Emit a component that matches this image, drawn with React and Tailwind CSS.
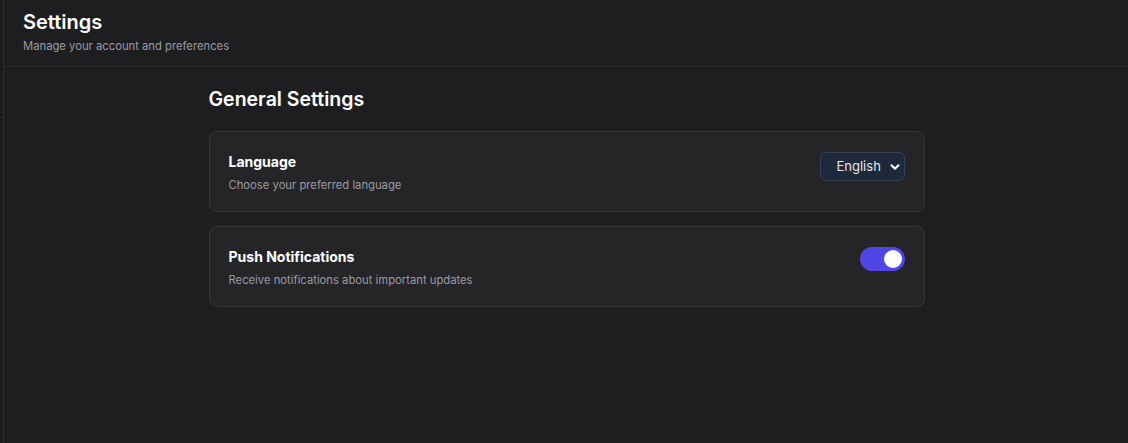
import React, { useState } from "react";

export default function App() {
  const [on, setOn] = useState(true);
  return (
    <div
      className="flex h-[443px] w-full bg-[#1e1e21] text-white overflow-hidden"
      style={{ fontFamily: "Inter, 'Noto Sans', sans-serif" }}
    >
      <aside className="w-[4px] shrink-0 border-r border-[#2e2e32] bg-[#1c1c1f]">
        <div className="h-[118px] border-b border-[#2e2e32]" />
      </aside>
      <main className="flex-1 flex flex-col min-w-0">
        <header className="pl-[19px] pr-5 pt-2 pb-3 border-b border-[#2b2b2f]">
          <h1 className="text-xl leading-7 font-semibold text-white">Settings</h1>
          <p className="mt-[2px] text-[11.25px] leading-4 text-[#9a9aa2]">Manage your account and preferences</p>
        </header>
        <div className="flex-1 flex justify-center pt-[18px]">
          <div className="w-[716px] ml-[1px]">
            <h2 className="text-[19.5px] leading-7 font-semibold text-white mb-[18px]">General Settings</h2>
            <div className="flex flex-col gap-[14px]">
              <div className="flex items-start justify-between rounded-lg border border-[#35353a] bg-[#252528] py-5 pl-[19px] pr-[19px] h-[81px]">
                <div>
                  <div className="text-sm leading-5 font-bold text-white">Language</div>
                  <div className="mt-[5px] text-[11.25px] leading-4 text-[#9a9aa2]">Choose your preferred language</div>
                </div>
                <div className="flex items-center h-[29px] w-[85px] rounded-md border border-[#334155] bg-[#1e293b] pl-4 pr-[4px] justify-between">
                  <span className="text-[13px] text-[#e5e7eb]">English</span>
                  <svg width="10" height="10" viewBox="0 0 10 10" className="text-white">
                    <path d="M1.5 3.2 L5 6.7 L8.5 3.2" fill="none" stroke="currentColor" strokeWidth="2" strokeLinecap="round" strokeLinejoin="round" />
                  </svg>
                </div>
              </div>
              <div className="flex items-start justify-between rounded-lg border border-[#35353a] bg-[#252528] py-5 pl-[19px] pr-[19px] h-[81px]">
                <div>
                  <div className="text-sm leading-5 font-bold text-white">Push Notifications</div>
                  <div className="mt-[5px] text-[11.25px] leading-4 text-[#9a9aa2]">Receive notifications about important updates</div>
                </div>
                <button
                  onClick={() => setOn(!on)}
                  className={`relative h-6 w-[45px] rounded-full ${on ? "bg-[#4f46e5]" : "bg-[#3f3f46]"}`}
                >
                  <span
                    className={`absolute top-[3px] h-[18px] w-[18px] rounded-full bg-white ${on ? "left-[24px]" : "left-[3px]"}`}
                  />
                </button>
              </div>
            </div>
          </div>
        </div>
      </main>
    </div>
  );
}
